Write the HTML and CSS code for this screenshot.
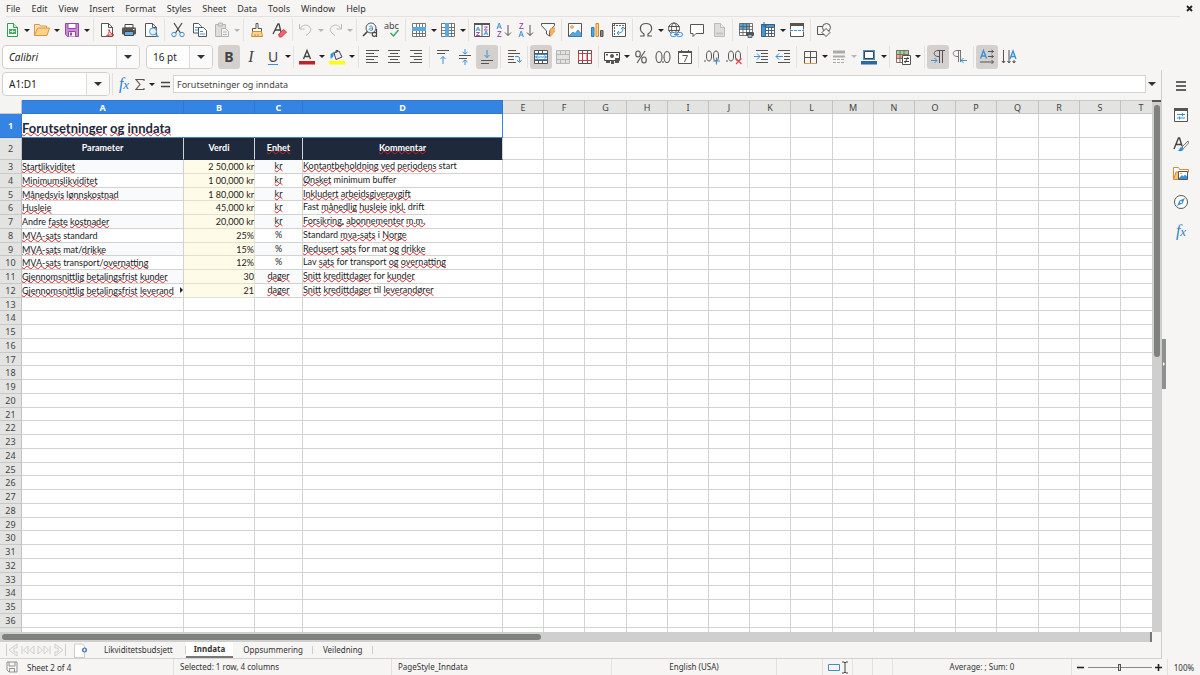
FILE: index.html
```html
<!DOCTYPE html>
<html lang="en">
<head>
<meta charset="utf-8">
<title>Inndata</title>
<link rel="stylesheet" href="styles.css">
</head>
<body>
<div class="app">
<header class="menubar">
  <nav class="menus">
    <button>File</button><button>Edit</button><button>View</button><button>Insert</button><button>Format</button><button>Styles</button><button>Sheet</button><button>Data</button><button>Tools</button><button>Window</button><button>Help</button>
  </nav>
  <button class="close" aria-label="Close document"><svg width="7" height="7" viewBox="0 0 7 7"><path d="M1 1l5 5M6 1l-5 5" stroke="#222" stroke-width="1.8"/></svg></button>
</header>

<div class="toolbar standard" role="toolbar" aria-label="Standard">
  <button class="tool" aria-label="New"><svg viewBox="0 0 16 16"><path d="M3.500 1.500h6l4 4v9h-10z" fill="#fff" stroke="#2f9e4f"/><path d="M9.500 1.500v4h4" fill="#d5efdb" stroke="#2f9e4f"/><path d="M5 7h7v5H5z" fill="#43ad60"/><path d="M6 9.500h5M8.500 8v3" stroke="#fff" stroke-width=".7"/></svg></button><button class="drop" aria-label="New options"></button>
  <button class="tool" aria-label="Open"><svg viewBox="0 0 16 16"><path d="M.500 13.500v-11h5l1 1.500h6v2" fill="#fbe3bd" stroke="#d9983a"/><path d="M.500 13.500l3-7.500h12l-2.500 7.500z" fill="#fcd18d" stroke="#d9983a"/></svg></button><button class="drop" aria-label="Recent files"></button>
  <button class="tool" aria-label="Save"><svg viewBox="0 0 16 16"><path d="M1.500 1.500h13v13h-11l-2-2z" fill="#c98bd3" stroke="#9b45ab"/><path d="M4 1.500h8v5H4z" fill="#fff" stroke="#9b45ab"/><path d="M4.500 14.500v-5h7v5" fill="#fff" stroke="#9b45ab"/><path d="M6 10.500h2v3H6z" fill="#9b45ab"/></svg></button><button class="drop" aria-label="Save options"></button>
  <span class="sep"></span>
  <button class="tool" aria-label="Export as PDF"><svg viewBox="0 0 16 16"><path d="M2.500 1.500h7l4 4v9h-11z" fill="#fff" stroke="#555"/><path d="M9.500 1.500v4h4" fill="none" stroke="#555"/><path d="M7 14.500c2.500-1.500 3.500-4 3-7 1 3.500 2.500 5 5 5.500-3-.5-5.500 0-8 1.500z" fill="#fff" stroke="#d33"/></svg></button>
  <button class="tool" aria-label="Print"><svg viewBox="0 0 16 16"><path d="M4 2.500h8V6H4z" fill="#fff" stroke="#444"/><rect x="1" y="5.500" width="14" height="7" rx="1" fill="#555"/><path d="M3.500 9.500h9v4h-9z" fill="#65aee4" stroke="#444"/><path d="M12 7.500h1.500" stroke="#fff"/></svg></button>
  <button class="tool" aria-label="Print preview"><svg viewBox="0 0 16 16"><path d="M2.500 1.500h7l4 4v9h-11z" fill="#fff" stroke="#555"/><path d="M9.500 1.500v4h4" fill="none" stroke="#555"/><circle cx="10" cy="9.500" r="3.500" fill="#e4f1fb" stroke="#4a9bd8"/><path d="M12.500 12l3 3" stroke="#4a9bd8" stroke-width="1.500"/></svg></button>
  <span class="sep"></span>
  <button class="tool" aria-label="Cut"><svg viewBox="0 0 16 16" fill="none"><path d="M4 1l6.500 10M12 1L5.500 11" stroke="#444" stroke-width="1.200"/><circle cx="4" cy="12.500" r="2.200" stroke="#3a92d4"/><circle cx="12" cy="12.500" r="2.200" stroke="#3a92d4"/></svg></button>
  <button class="tool" aria-label="Copy"><svg viewBox="0 0 16 16" fill="#fff" stroke="#555"><path d="M1.500 1.500h5l3 3v6.500h-8z"/><path d="M3 5.500h3M3 8h3" stroke="#3a92d4"/><path d="M6.500 5.500h5l3 3v6h-8z"/><path d="M8 9.500h3M8 12h5" stroke="#3a92d4"/></svg></button>
  <button class="tool" aria-label="Paste" disabled><svg viewBox="0 0 16 16" fill="#ddd" stroke="#b4b4b4"><path d="M1.500 2.500h10v12h-10z"/><path d="M4.500 1h4v3h-4z"/><path d="M7.500 6.500h4l3 3v5h-7z" fill="#f4f4f4"/><path d="M9 10h4M9 12.500h4"/></svg></button><button class="drop off" aria-label="Paste options" disabled></button>
  <span class="sep"></span>
  <button class="tool" aria-label="Clone formatting"><svg viewBox="0 0 16 16"><path d="M7 1.500h2v5h3.500v3h-9v-3H7z" fill="#fff" stroke="#555"/><path d="M3.500 9.500h9l1 5H2.500z" fill="#fbd394" stroke="#d88a28"/><path d="M6 12v2M9 12v2" stroke="#d88a28"/></svg></button>
  <button class="tool" aria-label="Clear formatting"><svg viewBox="0 0 16 16"><path d="M2 12L7 2h1l2 8M4 8h5" fill="none" stroke="#444" stroke-width="1.300"/><path d="M7.500 12.500l5-5 3 2.500-5 5h-2z" fill="#ed6570" stroke="#cf3b48"/></svg></button>
  <span class="sep"></span>
  <button class="tool" aria-label="Undo" disabled><svg viewBox="0 0 16 16" fill="none" stroke="#b9b9b9"><path d="M1.500 2v5h5M2 6.500c2-3 5-4 7.500-3 4.500 2 4 6 .5 8.500l-2 1.500"/></svg></button><button class="drop slim off" aria-label="Undo list" disabled></button>
  <button class="tool" aria-label="Redo" disabled><svg viewBox="0 0 16 16" fill="none" stroke="#b9b9b9"><path d="M14.500 2v5h-5M14 6.500c-2-3-5-4-7.500-3-4.500 2-4 6-.5 8.500l2 1.500"/></svg></button><button class="drop off" aria-label="Redo list" disabled></button>
  <span class="sep"></span>
  <button class="tool" aria-label="Find and replace"><svg viewBox="0 0 16 16" fill="none"><circle cx="9" cy="6" r="5" stroke="#555"/><path d="M5.500 9.500L1 14" stroke="#444" stroke-width="1.600"/><path d="M7.500 4.500c2-1 3 0 3 1v2.500c-3 .8-3.500-.3-3.200-1 .4-.8 1.700-1 3.200-.8" stroke="#3a92d4"/><path d="M14.500 7v8M14.500 11c-3-1.500-4.500 0-4.200 1.800.3 2 3 2 4.200.2" stroke="#444" stroke-width="1.200"/></svg></button>
  <button class="tool" aria-label="Spelling"><svg viewBox="0 0 16 16"><text x="0" y="7" class="icon-text">abc</text><path d="M6.500 11l3 3 5-6" fill="none" stroke="#34a866" stroke-width="1.500"/></svg></button>
  <span class="sep"></span>
  <button class="tool" aria-label="Row"><svg viewBox="0 0 16 16"><path d="M1.500 1.500h13v13h-13z" fill="#fff"/><path d="M1.500 1.500h13v13h-13zM5.500 1.500v13M8.500 1.500v13M11.500 1.500v13M1.500 11.500h13" fill="none" stroke="#666" stroke-width=".9"/><path d="M1 5h14v4H1z" fill="#58aae6"/></svg></button><button class="drop slim" aria-label="Row options"></button>
  <button class="tool" aria-label="Column"><svg viewBox="0 0 16 16"><path d="M1.500 1.500h13v13h-13z" fill="#fff"/><path d="M1.500 1.500h13v13h-13zM1.500 5.500h13M1.500 8.500h13M1.500 11.500h13M11.500 1.500v13" fill="none" stroke="#666" stroke-width=".9"/><path d="M5 1h4v14H5z" fill="#58aae6"/></svg></button><button class="drop slim" aria-label="Column options"></button>
  <span class="sep"></span>
  <button class="tool" aria-label="Sort"><svg viewBox="0 0 16 16"><path d="M.500 1.500h15v13H.500zM8 1.500v13" fill="#fff" stroke="#555"/><path d="M0 1h16v2H0z" fill="#555"/><path d="M2 9l2-4 2 4M3 7.800h2M10 13l2-4 2 4M11 11.800h2" fill="none" stroke="#3a92d4"/><path d="M2.200 10.500h3.300l-3.300 3h3.600M10.200 5h3.300l-3.300 3h3.600" fill="none" stroke="#a84ab8"/></svg></button>
  <button class="tool" aria-label="Sort ascending"><svg viewBox="0 0 16 16" fill="none"><path d="M1 7l2.200-6 2.200 6M2 5h2.700" stroke="#3a92d4"/><path d="M1.500 9.500H5l-3.500 5h4" stroke="#a84ab8"/><path d="M12 3v10.500M9 10.500l3 3 3-3" stroke="#555"/></svg></button>
  <button class="tool" aria-label="Sort descending"><svg viewBox="0 0 16 16" fill="none"><path d="M1 15l2.200-6 2.200 6M2 13h2.700" stroke="#3a92d4"/><path d="M1.500 1.500H5l-3.500 5h4" stroke="#a84ab8"/><path d="M12 3v10.500M9 10.500l3 3 3-3" stroke="#555"/></svg></button>
  <button class="tool" aria-label="AutoFilter"><svg viewBox="0 0 16 16"><path d="M1.500 1.500h13v2L9.500 9v5l-3-2V9l-5-5.500z" fill="#fff" stroke="#555"/><path d="M11 6h4l-1.500 3H15l-5 6 1-4.500H9.500z" fill="#fbb560" stroke="#e08d2b" stroke-width=".6"/></svg></button>
  <span class="sep"></span>
  <button class="tool" aria-label="Insert image"><svg viewBox="0 0 16 16"><path d="M1.500 1.500h13v13h-13z" fill="#fff" stroke="#555"/><circle cx="5" cy="5" r="1.500" fill="#fbc27a" stroke="#e08d2b" stroke-width=".7"/><path d="M2 14l4-4 2 1.500L11 8l3.500 4v2.500H2z" fill="#58a6e0" stroke="#2b7cbc" stroke-width=".7"/></svg></button>
  <button class="tool" aria-label="Insert chart"><svg viewBox="0 0 16 16"><path d="M2.500 5.500h2.500v9H2.500z" fill="#58a6e0" stroke="#2b7cbc"/><path d="M7 1.500h2.500v13H7z" fill="#fbd394" stroke="#d88a28"/><path d="M11.500 8.500H14v6h-2.500z" fill="#888" stroke="#555"/></svg></button>
  <button class="tool" aria-label="Insert pivot table"><svg viewBox="0 0 16 16"><path d="M1.500 1.500h13v13h-13z" fill="#fff" stroke="#555"/><path d="M2 3.500h12M3.500 2v12" stroke="#666" stroke-dasharray="2 1"/><path d="M6 11c5 0 6-1 6-6M6 11l2-2M6 11l2 2M12 5l-2 2M12 5l2 2" fill="none" stroke="#3a92d4"/></svg></button>
  <span class="sep"></span>
  <button class="tool" aria-label="Special character"><svg viewBox="0 0 16 16"><path d="M2 14h4v-2C0 8 2 1.500 8 1.500S16 8 10 12v2h4" fill="none" stroke="#555" stroke-width="1.200"/></svg></button><button class="drop slim" aria-label="Symbols"></button>
  <button class="tool" aria-label="Hyperlink"><svg viewBox="0 0 16 16" fill="none"><circle cx="7" cy="6.500" r="5.500" stroke="#555"/><ellipse cx="7" cy="6.500" rx="2.500" ry="5.500" stroke="#555"/><path d="M1.500 4.500h11M1.500 8.500h11" stroke="#555"/><rect x="3.500" y="10.500" width="6" height="4" rx="2" fill="#f6f5f4" stroke="#3a92d4"/><rect x="9.500" y="10.500" width="6" height="4" rx="2" fill="#f6f5f4" stroke="#3a92d4"/><path d="M7 12.500h5" stroke="#3a92d4"/></svg></button>
  <button class="tool" aria-label="Insert comment"><svg viewBox="0 0 16 16"><path d="M1.500 2.500h13v9H7l-3 3v-3H1.500z" fill="#fff" stroke="#555"/></svg></button>
  <button class="tool" aria-label="Headers and footers" disabled><svg viewBox="0 0 16 16"><path d="M3.500 1.500h6l4 4v9h-10z" fill="#ddd" stroke="#bbb"/><path d="M9.500 1.500v4h4" fill="#eee" stroke="#bbb"/><path d="M5 11.500h7" stroke="#c4c4c4" stroke-width="2"/></svg></button>
  <span class="sep"></span>
  <button class="tool" aria-label="Define print area"><svg viewBox="0 0 16 16"><path d="M1.500 1.500h13v12h-13z" fill="#fff"/><path d="M2 1.500h9V7H2z" fill="#58a6e0"/><path d="M1.500 1.500h13v12h-13zM1.500 4.500h13M1.500 7.500h13M1.500 10.500h13M5 1.500v12M8.500 1.500v12M11.500 1.500v12" fill="none" stroke="#555" stroke-width=".8"/><rect x="8" y="10" width="8" height="4" rx="1" fill="#555"/><path d="M10 12.500h4v3h-4z" fill="#83bde9" stroke="#444" stroke-width=".7"/></svg></button>
  <button class="tool" aria-label="Freeze rows and columns"><svg viewBox="0 0 16 16"><path d="M2 2h13v13H2z" fill="#fff"/><path d="M1.500 2h13.500v3H5v10H1.500z" fill="#3c98dd"/><path d="M1.500 2.500h13v12h-13zM5 5.500h9.500M5 8.500h9.500M5 11.500h9.500M5.500 2.500v12M8.500 5v9.500M11.500 5v9.500" fill="none" stroke="#456" stroke-width=".9"/><path d="M4 0v5M1 3h6" stroke="#1f6cae"/></svg></button><button class="drop slim" aria-label="Freeze options"></button>
  <button class="tool" aria-label="Split window"><svg viewBox="0 0 16 16"><path d="M1.500 1.500h13v13h-13z" fill="#fff" stroke="#555"/><path d="M1 1h14v3H1z" fill="#555"/><path d="M1 8.500h14" stroke="#fff" stroke-width="2"/><path d="M1 8.500h14" stroke="#3a92d4" stroke-dasharray="3 1"/></svg></button>
  <span class="sep"></span>
  <button class="tool" aria-label="Show draw functions"><svg viewBox="0 0 16 16" fill="#f6f5f4" stroke="#555"><path d="M1.500 4.500h8v8h-8z"/><circle cx="10.500" cy="5.500" r="4"/><path d="M10 6.500l4 4-4 4-4-4z"/></svg></button>
</div>

<div class="toolbar formatting" role="toolbar" aria-label="Formatting">
  <div class="combo font-name"><input class="italic" aria-label="Font name" value="Calibri"><button aria-label="Choose font"></button></div>
  <div class="combo font-size"><input aria-label="Font size" value="16 pt"><button aria-label="Choose size"></button></div>
  <button class="tool on letter bold" aria-label="Bold">B</button>
  <button class="tool letter serif" aria-label="Italic">I</button>
  <button class="tool letter under" aria-label="Underline">U</button><button class="drop slim" aria-label="Underline styles"></button>
  <span class="sep"></span>
  <button class="tool" aria-label="Font color"><svg viewBox="0 0 16 16"><path d="M4.500 10L8 1.500 11.500 10M5.800 7.500h4.400" fill="none" stroke="#444" stroke-width="1.400"/><path d="M0 12h16v3.500H0z" fill="#c42127"/></svg></button><button class="drop" aria-label="Font colors"></button>
  <button class="tool" aria-label="Highlighting"><svg viewBox="0 0 16 16"><path d="M5 4l5-2 3 6-6 2.500z" fill="#eee" stroke="#444"/><path d="M7 4V1.500h2" fill="none" stroke="#444"/><path d="M1.500 10V5l4-2.500L4 8z" fill="#3a92d4"/><path d="M0 12h16v3.500H0z" fill="#ff0"/></svg></button><button class="drop" aria-label="Highlight colors"></button>
  <span class="sep"></span>
  <button class="tool" aria-label="Align left"><svg viewBox="0 0 16 16" stroke="#555"><path d="M2 1.500h13M2 4.500h8M2 7.500h12M2 10.500h8M2 13.500h12"/></svg></button>
  <button class="tool" aria-label="Center horizontally"><svg viewBox="0 0 16 16" stroke="#555"><path d="M2 1.500h12M4 4.500h8M2 7.500h12M4 10.500h8M2 13.500h12"/></svg></button>
  <button class="tool" aria-label="Align right"><svg viewBox="0 0 16 16" stroke="#555"><path d="M2 1.500h12M6 4.500h8M2 7.500h12M6 10.500h8M2 13.500h12"/></svg></button>
  <span class="sep"></span>
  <button class="tool" aria-label="Align top"><svg viewBox="0 0 16 16" fill="none" stroke="#555"><path d="M2 1.500h12M2 4.500h8"/><path d="M8 15V7.500M5.500 10L8 7.500l2.500 2.500" stroke="#3a92d4"/></svg></button>
  <button class="tool" aria-label="Center vertically"><svg viewBox="0 0 16 16" fill="none" stroke="#555"><path d="M2 6.500h12M2 9.500h8"/><path d="M8 0v5M5.500 3L8 5l2.500-2M8 16v-5M5.500 13L8 11l2.500 2" stroke="#3a92d4"/></svg></button>
  <button class="tool on" aria-label="Align bottom"><svg viewBox="0 0 16 16" fill="none" stroke="#555"><path d="M2 11.500h12M2 14.500h8"/><path d="M8 1v7.500M5.500 6L8 8.500 10.500 6" stroke="#3a92d4"/></svg></button>
  <span class="sep"></span>
  <button class="tool" aria-label="Wrap text"><svg viewBox="0 0 16 16" fill="none" stroke="#555"><path d="M2 1.500h8M2 4.500h12M2 7.500h6M2 10.500h6M2 13.500h8"/><path d="M9 7.500h3c2 0 1.500 3 1.500 5M11 11l2.500 2.500L15.500 11" stroke="#3a92d4"/></svg></button>
  <span class="sep"></span>
  <button class="tool on" aria-label="Merge and center cells"><svg viewBox="0 0 16 16"><path d="M1.500 1.500h13v13h-13z" fill="#fff"/><path d="M1.500 1.500h13v13h-13zM1.500 4.500h13M1.500 11.500h13M5.500 1.500v3M9.500 1.500v3M5.500 11.500v3M9.500 11.500v3" fill="none" stroke="#555"/><path d="M2 5.500h12M2 10.500h12M2.500 8h11M4.500 6.500l-2 1.500 2 1.500M11.500 6.500l2 1.500-2 1.500" fill="none" stroke="#3a92d4"/></svg></button>
  <button class="tool" aria-label="Merge cells" disabled><svg viewBox="0 0 16 16" fill="#e2e2e2" stroke="#b5b5b5"><path d="M1.500 1.500h13v13h-13zM1.500 5.500h13M1.500 10.500h13M5.500 1.500v4M10.500 1.500v4M5.500 10.500v4M10.500 10.500v4"/></svg></button>
  <button class="tool" aria-label="Split cells"><svg viewBox="0 0 16 16" fill="#fff"><path d="M1.500 1.500h13v13h-13zM5.500 1.500v13M10.500 1.500v13" stroke="#555"/><path d="M1 4.500h14M1 11.500h14M1.500 5v6M5.500 5v6M10 5v6M14.500 5v6" stroke="#d9393f"/></svg></button>
  <span class="sep"></span>
  <button class="tool" aria-label="Format as currency"><svg viewBox="0 0 16 16"><path d="M.500 3.500h15v8H.500z" fill="#fff" stroke="#444"/><circle cx="8" cy="7" r="2" fill="#555"/><path d="M2 5h2v1.500H2zM12 5h2v1.500h-2zM7 11h3v4H7zM11 9h4v5h-4zM2 12h4v2H2z" fill="#555"/></svg></button><button class="drop slim" aria-label="Currencies"></button>
  <button class="tool" aria-label="Format as percent"><svg viewBox="0 0 16 16" fill="none" stroke="#555" stroke-width="1.100"><ellipse cx="5" cy="5" rx="2.300" ry="3"/><ellipse cx="11" cy="11" rx="2.300" ry="3"/><path d="M12 2L4 14"/></svg></button>
  <button class="tool" aria-label="Format as number"><svg viewBox="0 0 16 16" fill="none" stroke="#555" stroke-width="1.100"><ellipse cx="4" cy="8" rx="3" ry="5.500"/><ellipse cx="12" cy="8" rx="3" ry="5.500"/><path d="M8 12v2"/></svg></button>
  <button class="tool" aria-label="Format as date"><svg viewBox="0 0 16 16" fill="none" stroke="#555"><path d="M1.500 2.500h13v12h-13z" fill="#fff"/><path d="M1 3h14" stroke-width="2"/><path d="M4.500 1v3M11.500 1v3"/><path d="M5.500 6.500h5L7.500 13"/></svg></button>
  <span class="sep"></span>
  <button class="tool" aria-label="Add decimal place"><svg viewBox="0 0 16 16" fill="none" stroke="#555"><ellipse cx="5" cy="7" rx="2.500" ry="5"/><ellipse cx="12" cy="7" rx="2.500" ry="5"/><path d="M1 11v2"/><path d="M12.500 8.500v7M9 12h7" stroke="#3a92d4" stroke-width="1.200"/></svg></button>
  <button class="tool" aria-label="Delete decimal place"><svg viewBox="0 0 16 16" fill="none" stroke="#555"><ellipse cx="5" cy="7" rx="2.500" ry="5"/><ellipse cx="12" cy="7" rx="2.500" ry="5"/><path d="M1 11v2"/><path d="M10 9.500l5.500 5.500M15.500 9.500L10 15" stroke="#e0474c" stroke-width="1.200"/></svg></button>
  <span class="sep"></span>
  <button class="tool" aria-label="Increase indent"><svg viewBox="0 0 16 16" fill="none" stroke="#555"><path d="M3 1.500h12M8 4.500h7M8 7.500h7M8 10.500h7M3 13.500h12"/><path d="M1 7.500h6M4 4.500l3 3-3 3" stroke="#3a92d4"/></svg></button>
  <button class="tool" aria-label="Decrease indent"><svg viewBox="0 0 16 16" fill="none" stroke="#555"><path d="M3 1.500h12M9 4.500h6M9 7.500h6M9 10.500h6M3 13.500h12"/><path d="M8 7.500H1M4 4.500l-3 3 3 3" stroke="#3a92d4"/></svg></button>
  <span class="sep"></span>
  <button class="tool" aria-label="Borders"><svg viewBox="0 0 16 16" fill="none"><path d="M2.500 14V2.500h12V14M8.500 2.500V14M2.500 8.500h12" stroke="#555"/><path d="M2 14.500h13" stroke="#e69a44"/></svg></button><button class="drop slim" aria-label="Border options"></button>
  <button class="tool" aria-label="Border style" disabled><svg viewBox="0 0 16 16" stroke="#aaa"><path d="M2 3h12" stroke-width="3"/><path d="M2 7.500h12" stroke-width="2"/><path d="M2 10.500h12M2 13.500h12" stroke-dasharray="3 1"/></svg></button><button class="drop off" aria-label="Border styles" disabled></button>
  <button class="tool" aria-label="Border color"><svg viewBox="0 0 16 16"><path d="M2 1h12v10H2z" fill="#4b95cf"/><path d="M3.500 2.500h9v7h-9z" fill="#fff" stroke="#444"/><path d="M0 12h16v3.500H0z" fill="#2768a5"/></svg></button><button class="drop slim" aria-label="Border colors"></button>
  <span class="sep"></span>
  <button class="tool" aria-label="Conditional formatting"><svg viewBox="0 0 16 16"><path d="M1 1h13v4H1z" fill="#93d6a1"/><path d="M1 5h13v5H1z" fill="#f3a5a5"/><path d="M1.500 1.500h12v12h-12zM1.500 5.500h12M1.500 9.500h12M5 1.500v12M9 1.500v12" fill="none" stroke="#765" stroke-width=".9"/><path d="M7.500 6.500h8v9h-8z" fill="#fff" stroke="#555"/><path d="M9 9.500h5M9 12.500h5M13 8l-3 6" stroke="#444"/></svg></button><button class="drop" aria-label="Conditional options"></button>
  <span class="sep"></span>
  <button class="tool on" aria-label="Left-to-right"><svg viewBox="0 0 16 16"><path d="M15 1.500H8c-5 0-5 6 0 6h1M9.500 1.500V14M12.500 1.500V14" fill="none" stroke="#555"/><path d="M1 11.500h6M4.500 9L7 11.500 4.500 14" fill="none" stroke="#3a92d4"/></svg></button>
  <button class="tool" aria-label="Right-to-left"><svg viewBox="0 0 16 16"><path d="M9 1.500H5c-5 0-5 6 0 6h1M6.500 1.500V13M8.500 1.500V13" fill="none" stroke="#777"/><path d="M15 11.500H9M11.500 9L9 11.500l2.500 2.500" fill="none" stroke="#3a92d4"/></svg></button>
  <span class="sep"></span>
  <button class="tool on" aria-label="Horizontal text"><svg viewBox="0 0 16 16" fill="none" stroke="#555"><path d="M1.500 9.500L4.500 1.500l3 8M2.500 7h4" stroke="#3a92d4" stroke-width="1.400"/><path d="M9 2.500h5.500M9 7.500h5.500M1 13h13.500M12.500 1l2 1.500-2 1.500M12.500 6l2 1.500-2 1.500M12.500 11l2 2-2 2"/></svg></button>
  <button class="tool" aria-label="Vertical text"><svg viewBox="0 0 16 16" fill="none" stroke="#555"><path d="M9 10L12 2l3 8M10 7.500h4" stroke="#3a92d4" stroke-width="1.400"/><path d="M2.500 1v13M8 1v13M13 11v3M1 12l1.500 2L4 12M6.500 12L8 14l1.500-2M11.500 12l1.500 2 1.500-2"/></svg></button>
</div>

<div class="work">
  <main class="document">
    <div class="formula-bar">
      <div class="combo name-box"><input aria-label="Name box" value="A1:D1"><button aria-label="Choose range"></button></div>
      <span class="sep"></span>
      <button class="fx" aria-label="Function wizard">f<small>x</small></button>
      <button class="sum" aria-label="Select function"><svg width="10" height="13" viewBox="0 0 10 13"><path d="M9 3V1.500H1l4 5-4 5h8V10" fill="none" stroke="#555" stroke-width="1.100"/></svg></button><button class="drop sum-drop" aria-label="Functions"></button>
      <button class="equals" aria-label="Formula"><svg width="9" height="7" viewBox="0 0 9 7"><path d="M0 1.500h9M0 5.500h9" stroke="#444" stroke-width="1.400"/></svg></button>
      <input class="formula" aria-label="Input line" value="Forutsetninger og inndata">
      <button class="drop big expand" aria-label="Expand formula bar"></button>
    </div>
    <div class="sheet-area">
      <div class="viewport"><table class="sheet" id="sheet"></table></div>
      <div class="vscroll"><div class="vthumb"></div></div>
    </div>
    <div class="hscroll"><div class="hthumb"></div></div>
    <nav class="sheet-tabs">
      <div class="tab-nav">
        <button aria-label="First sheet"><svg width="14" height="14" viewBox="0 0 14 14"><path d="M1.500 1v12M12 1L4 7l8 6V9H9V5h3z"/></svg></button><button aria-label="Previous sheet"><svg width="14" height="14" viewBox="0 0 14 14"><path d="M1 3v8M7 3L2.500 7 7 11zM13 3L8.500 7l4.500 4z"/></svg></button><button aria-label="Next sheet"><svg width="14" height="14" viewBox="0 0 14 14"><path d="M13 3v8M7 3l4.500 4L7 11zM1 3l4.500 4L1 11z"/></svg></button><button aria-label="Last sheet"><svg width="14" height="14" viewBox="0 0 14 14"><path d="M12.500 1v12M2 1l8 6-8 6V9h3V5H2z"/></svg></button>
      </div>
      <button class="add-sheet" aria-label="Add sheet"><svg width="14" height="15" viewBox="0 0 14 15"><path d="M.500 1h8l2 2v11.500H.500z" fill="#fff" stroke="#ccc"/><circle cx="10.500" cy="7" r="2.500" fill="#4777b5"/><path d="M9 7h3M10.500 5.500v3" stroke="#fff" stroke-width=".8"/></svg></button>
      <button class="tab tab-first">Likviditetsbudsjett</button><button class="tab active">Inndata</button><button class="tab">Oppsummering</button><button class="tab">Veiledning</button>
    </nav>
  </main>
  <aside class="sidebar">
    <button aria-label="Sidebar settings"><svg viewBox="0 0 16 16"><path d="M3 4h10M3 8h10M3 12h10" stroke="#333" stroke-width="1.500"/></svg></button>
    <button aria-label="Properties"><svg viewBox="0 0 16 16"><path d="M1.500 1.500h13v13h-13z" fill="#fff" stroke="#555"/><path d="M1 2.500h14" stroke="#555" stroke-width="3"/><path d="M4 7.500h8M4 11h8M9.500 6v3M6.500 9.500v3" stroke="#3a92d4"/></svg></button>
    <button aria-label="Styles"><svg viewBox="0 0 16 16"><path d="M1 13L5.500 2h1L9 10M3 8.500h5" fill="none" stroke="#444" stroke-width="1.400"/><path d="M15 5L9 11l1.500 1.500L15.500 7z" fill="#fff" stroke="#555" stroke-width=".8"/><path d="M4.500 14.500c2 0 2-3.500 4.500-3.500l1.500 1.500c0 2.500-3 3.500-6 2z" fill="#3a92d4"/></svg></button>
    <button aria-label="Gallery"><svg viewBox="0 0 16 16"><path d="M.500 14.500v-12h5l1 2h9v3" fill="#fff" stroke="#dc8931"/><path d="M.500 14.500L3 7h3v7.500z" fill="#fcc27a" stroke="#dc8931"/><path d="M5.500 6.500h9v8h-9z" fill="#fff" stroke="#555"/><path d="M6 13l3-3 1.500 1.500L12 9.500l2 2V14H6z" fill="#3a92d4"/><circle cx="8" cy="8.500" r=".8" fill="#dc8931"/></svg></button>
    <button aria-label="Navigator"><svg viewBox="0 0 16 16"><circle cx="8" cy="8" r="6.500" fill="#fff" stroke="#555"/><path d="M12 4L9.500 9.500 4 12l2.500-5.500z" fill="#3a92d4"/><circle cx="8" cy="8" r="1" fill="#fff"/></svg></button>
    <button class="fx" aria-label="Functions">f<small>x</small></button>
    <div class="side-handle"></div>
  </aside>
</div>

<footer class="status">
  <div class="st-sheet"><svg width="12" height="12" viewBox="0 0 12 12" fill="none" stroke="#888" stroke-width=".9"><path d="M1 1h10v10H3L1 9zM3 1v4h6V1M3.500 11V7.500h5V11"/></svg><span>Sheet 2 of 4</span></div>
  <div class="st-left">Selected: 1 row, 4 columns</div>
  <div class="st-left">PageStyle_Inndata</div>
  <div class="st-center">English (USA)</div>
  <div></div>
  <div class="st-mode"><svg width="20" height="13" viewBox="0 0 20 13" fill="none"><path d="M.500 3.500h11v6H.500z" stroke="#3a92c4"/><path d="M14 1h2l1 1 1-1h2M17 2v9M14 12h2l1-1 1 1h2" stroke="#444"/></svg></div>
  <div></div><div></div>
  <div class="st-center">Average: ; Sum: 0</div>
  <div class="st-zoom"><button aria-label="Zoom out"><svg width="7" height="7" viewBox="0 0 7 7"><path d="M0 3.500h7" stroke="#222" stroke-width="1.600"/></svg></button><input type="range" aria-label="Zoom" min="0" max="100" value="50"><button aria-label="Zoom in"><svg width="7" height="7" viewBox="0 0 7 7"><path d="M0 3.500h7M3.500 0v7" stroke="#222" stroke-width="1.600"/></svg></button></div>
  <button class="st-percent">100%</button>
</footer>
</div>
<script src="sheet.js"></script>
</body>
</html>
```

FILE: sheet.js
```js
// Words between underscores are flagged by the spelling checker.
const rows = [
  ["_Startlikviditet_", "2 50,000 kr", "_kr_", "_Kontantbeholdning_ _ved_ _periodens_ start"],
  ["_Minimumslikviditet_", "1 00,000 kr", "_kr_", "_Ønsket_ minimum buffer"],
  ["_Månedsvis_ _lønnskostnad_", "1 80,000 kr", "_kr_", "_Inkludert_ _arbeidsgiveravgift_"],
  ["_Husleie_", "45,000 kr", "_kr_", "Fast _månedlig_ _husleie_ _inkl._ drift"],
  ["Andre _faste_ _kostnader_", "20,000 kr", "_kr_", "_Forsikring,_ _abonnementer_ _m.m._"],
  ["_MVA-sats_ standard", "25%", "%", "Standard _mva-sats_ i _Norge_"],
  ["_MVA-sats_ mat/_drikke_", "15%", "%", "_Redusert_ _sats_ for mat _og_ _drikke_"],
  ["_MVA-sats_ transport/_overnatting_", "12%", "%", "Lav _sats_ for transport _og_ _overnatting_"],
  ["_Gjennomsnittlig_ _betalingsfrist_ _kunder_", "30", "_dager_", "_Snitt_ _kredittdager_ for _kunder_"],
  ["_Gjennomsnittlig_ _betalingsfrist_ _leverand_", "21", "_dager_", "_Snitt_ _kredittdager_ til _leverandører_"]
];
const letters = "ABCDEFGHIJKLMNOPQRST".split("");
const mark = text => text.replace(/_([^_]+)_/g, '<span class="spell">$1</span>');
const blanks = count => "<td></td>".repeat(count);

let html = "<colgroup><col class='c-num'><col class='c-a'><col class='c-b'><col class='c-c'><col class='c-d'>";
for (let i = 1; i <= 16; i++) html += i % 5 === 3 ? "<col class='c-wide'>" : "<col class='c-std'>";
html += "</colgroup><thead><tr><th class='corner'></th>";
letters.forEach((l, i) => { html += `<th scope="col"${i < 4 ? ' class="picked"' : ""}>${l}</th>`; });
html += "</tr></thead><tbody>";
html += `<tr class="title-row"><th scope="row" class="picked">1</th><td colspan="4" class="title">${mark("_Forutsetninger_ _og_ _inndata_")}</td>${blanks(16)}</tr>`;
html += `<tr class="head-row"><th scope="row">2</th>${["Parameter", "Verdi", "_Enhet_", "_Kommentar_"].map(t => `<td class="head">${mark(t)}</td>`).join("")}${blanks(16)}</tr>`;
rows.forEach((r, i) => {
  const more = i === rows.length - 1 ? ' more' : '';
  html += `<tr class="${i % 2 ? "" : "shade"}"><th scope="row">${i + 3}</th><td class="name${more}">${mark(r[0])}</td><td class="value">${r[1]}</td><td class="unit">${mark(r[2])}</td><td class="note">${mark(r[3])}</td>${blanks(16)}</tr>`;
});
for (let n = 13; n <= 37; n++) html += `<tr><th scope="row">${n < 37 ? n : ""}</th>${blanks(20)}</tr>`;
document.getElementById("sheet").innerHTML = html + "</tbody>";
```

FILE: styles.css
```css
* { box-sizing: border-box; }
body { margin: 0; font-family: "Noto Sans", sans-serif; font-size: 9px; color: #333; background: #f6f5f4; }
button { margin: 0; padding: 0; border: 0; background: none; color: inherit; font: inherit; }
input { min-width: 0; font: inherit; color: #222; }
svg { display: block; }

.app { display: flex; flex-direction: column; height: 100vh; overflow: hidden; }

.menubar { display: flex; justify-content: space-between; height: 17px; padding: 0 7px 0 6px; flex: none; }
.menus { display: flex; flex: 1; gap: 11px; border-bottom: 1px solid #e3e2e1; margin-right: 6px; }
.close { width: 7px; }

.toolbar { display: flex; align-items: center; height: 27px; padding-left: 1px; flex: none; }
.toolbar.standard { height: 26px; }
.tool { display: grid; place-items: center; width: 22px; height: 24px; border-radius: 3px; flex: none; }
.tool svg { width: 16px; height: 16px; overflow: visible; }
.tool.on { background: #d3d0cd; }
.icon-text { font-family: "Noto Sans", sans-serif; font-size: 9px; fill: #444; }
.letter { font-size: 14px; line-height: 16px; color: #444; }
.letter.bold { font-weight: 700; }
.letter.serif { font-family: "Liberation Serif", serif; font-style: italic; font-size: 16px; }
.letter.under { text-decoration: underline; text-decoration-color: #3a92d4; text-underline-offset: 2px; }
.drop { display: grid; place-items: center; width: 8px; height: 22px; flex: none; }
.drop.slim { width: 7px; }
.drop::after { content: ""; border: 3px solid transparent; border-top-color: #222; border-bottom: 0; }
.drop.off::after { border-top-color: #b5b5b5; }
.sep { width: 1px; height: 22px; margin: 0 2px; background: #e2e1df; flex: none; }

.combo { display: flex; height: 24px; background: #fff; border: 1px solid #d2cfcc; border-radius: 4px; overflow: hidden; flex: none; }
.combo input { flex: 1; border: 0; padding: 0 6px; background: transparent; font-size: 10px; outline: 0; }
.combo input.italic { font-style: italic; }
.combo button { display: grid; place-items: center; width: 23px; border-left: 1px solid #dedbd8; background: #fbfafa; }
.combo button::after, .drop.big::after { content: ""; border: 4px solid transparent; border-top-color: #333; border-bottom: 0; }
.font-name { width: 138px; margin: 0 6px 0 1px; }
.font-size { width: 67px; margin-right: 5px; }

.work { display: flex; flex: 1; min-height: 0; }
.document { display: flex; flex: 1; flex-direction: column; min-width: 0; }
.formula-bar { display: flex; align-items: center; height: 30px; padding: 0 4px 2px 2px; flex: none; }
.name-box { width: 108px; }
.fx { color: #2a84c8; font-family: "Liberation Serif", serif; font-style: italic; font-size: 16px; line-height: 16px; }
.fx small { font-size: 13px; }
.formula-bar .fx { width: 18px; }
.sum { width: 14px; display: grid; place-items: center; }
.sum-drop { width: 10px; }
.equals { width: 16px; display: grid; place-items: center; }
.formula { flex: 1; height: 18px; border: 1px solid #d5d3d1; background: #fff; padding: 0 3px; color: #444; outline: 0; }
.expand { width: 11px; }

.sheet-area { display: flex; flex: 1; min-height: 0; }
.viewport { flex: 1; overflow: hidden; background: #fff; }
.sheet { table-layout: fixed; width: 1162px; border-collapse: separate; border-spacing: 0; font-family: Lato, sans-serif; font-size: 9px; line-height: 11px; color: #222; }
.c-num { width: 22px; }
.c-a { width: 162px; }
.c-b { width: 71px; }
.c-c { width: 48px; }
.c-d { width: 200px; }
.c-std { width: 41px; }
.c-wide { width: 42px; }
.sheet th { padding: 0; font-family: "Noto Sans", sans-serif; font-weight: 400; color: #444; background: #e3e3e2; border-right: 1px solid #c2c2c2; border-bottom: 1px solid #c8c8c8; }
.sheet thead th { height: 14px; border-top: 1px solid #c8c8c8; }
.sheet thead th.corner { background: #f4f4f3; border-top-color: #f4f4f3; }
.sheet th.picked, .sheet thead th.picked { background: #3584e4; border-color: #2f78d0; color: #fff; font-weight: 700; }
.sheet td { padding: 0; border-right: 1px solid #d2d2d2; border-bottom: 1px solid #d2d2d2; white-space: nowrap; }
.sheet tbody tr { height: 14px; }
.sheet tbody tr:nth-child(4n + 1) { height: 13px; }
.sheet tbody tr.title-row { height: 24px; }
.sheet tbody tr.head-row { height: 22px; }
.sheet .title { padding: 6px 0 0; border-color: #3584e4; font-size: 13px; line-height: 17px; font-weight: 700; color: #1e293b; }
.sheet .head { background: #1e293b; color: #fff; font-weight: 700; text-align: center; border-bottom-color: #1e293b; vertical-align: top; padding-top: 4px; }
.sheet .name { overflow: hidden; }
.sheet .value { text-align: right; background: #fefbe8; border-color: #e2e0d0; }
.sheet .unit { text-align: center; }
.sheet .unit, .sheet .note { line-height: 12px; vertical-align: top; }
.shade .name, .shade .unit { background: #f8fafc; }
.more { position: relative; }
.more::after { content: ""; position: absolute; right: 0; top: 3px; border: 3px solid transparent; border-left-color: #222; border-right: 0; }
.spell { text-decoration: underline wavy #e01b24 1px; text-underline-offset: -1px; text-decoration-skip-ink: none; }

.vscroll { width: 9px; background: #cfcfcf; border-top: 2px solid #555; padding: 3px 2px; flex: none; }
.vthumb { width: 6px; height: 48%; border-radius: 3px; background: #7f817f; }
.hscroll { height: 10px; margin-right: 9px; padding: 2px; background: #cfcfcf; border-right: 2px solid #777; flex: none; }
.hthumb { width: 47%; height: 6px; border-radius: 3px; background: #7f817f; }

.sheet-tabs { display: flex; height: 17px; border-bottom: 1px solid #d4d2d0; font-size: 8px; flex: none; }
.tab-nav { display: flex; align-items: center; gap: 2px; width: 68px; padding-left: 5px; }
.tab-nav path { fill: none; stroke: #cfcecc; }
.add-sheet { width: 23px; padding-left: 6px; }
.tab { position: relative; padding: 0 10px; line-height: 14px; }
.tab-first { padding-left: 13px; padding-right: 13px; }
.tab.active { background: #fff; font-weight: 700; border-bottom: 2px solid #777; padding: 0 8px; }
.tab:not(.active)::after { content: ""; position: absolute; right: 0; top: 4px; height: 8px; border-right: 1px solid #cfcdcb; }

.sidebar { position: relative; display: flex; flex-direction: column; align-items: center; gap: 13px; width: 39px; padding-top: 8px; border-left: 1px solid #cfcdcb; flex: none; }
.sidebar button { width: 16px; height: 16px; white-space: nowrap; }
.side-handle { position: absolute; left: 0; top: 269px; width: 4px; height: 50px; background: #8f9191; display: grid; place-items: center; }
.side-handle::after { content: ""; border: 2px solid transparent; border-left-color: #fff; border-right: 0; }

.status { display: grid; grid-template-columns: 174fr 218fr 220fr 165fr 46fr 30fr 20fr 20fr 179fr 96fr 32fr; height: 16px; line-height: 15px; font-size: 8px; flex: none; }
.status > * { border-right: 1px solid #e2e1df; white-space: nowrap; min-width: 0; }
.st-sheet { display: flex; align-items: center; gap: 9px; padding-left: 6px; }
.st-left { padding-left: 6px; }
.st-center { text-align: center; }
.st-mode { display: grid; place-items: center; }
.st-zoom { display: flex; align-items: center; justify-content: space-between; padding: 0 5px; }
.status .st-percent { border-right: 0; }
.st-zoom input { appearance: none; width: 64px; height: 8px; margin: 0; background: linear-gradient(#888, #888) center / 100% 1px no-repeat; }
.st-zoom input::-webkit-slider-thumb { appearance: none; width: 3px; height: 7px; border: 1px solid #555; background: #ddd; }
```
